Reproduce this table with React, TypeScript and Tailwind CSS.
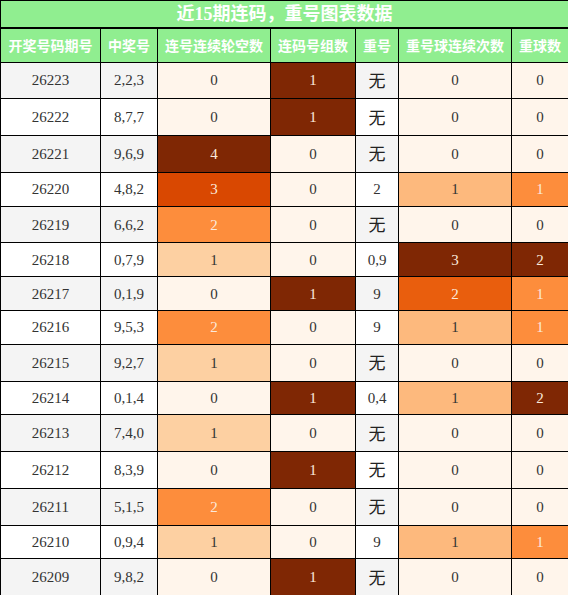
const rows: [string, string, number, number, string, number, number][] = [
  ['26223', '2,2,3', 0, 1, '无', 0, 0],
  ['26222', '8,7,7', 0, 1, '无', 0, 0],
  ['26221', '9,6,9', 4, 0, '无', 0, 0],
  ['26220', '4,8,2', 3, 0, '2', 1, 1],
  ['26219', '6,6,2', 2, 0, '无', 0, 0],
  ['26218', '0,7,9', 1, 0, '0,9', 3, 2],
  ['26217', '0,1,9', 0, 1, '9', 2, 1],
  ['26216', '9,5,3', 2, 0, '9', 1, 1],
  ['26215', '9,2,7', 1, 0, '无', 0, 0],
  ['26214', '0,1,4', 0, 1, '0,4', 1, 2],
  ['26213', '7,4,0', 1, 0, '无', 0, 0],
  ['26212', '8,3,9', 0, 1, '无', 0, 0],
  ['26211', '5,1,5', 2, 0, '无', 0, 0],
  ['26210', '0,9,4', 1, 0, '9', 1, 1],
  ['26209', '9,8,2', 0, 1, '无', 0, 0],
];

const headers = ['开奖号码期号', '中奖号', '连号连续轮空数', '连码号组数', '重号', '重号球连续次数', '重球数'];

// matplotlib "Oranges" stops
const stops = ['#fff5eb', '#fee6ce', '#fdd0a2', '#fdae6b', '#fd8d3c', '#f16913', '#d94801', '#a63603', '#7f2704'];

function hex(c: string) {
  return [1, 3, 5].map((i) => parseInt(c.slice(i, i + 2), 16));
}

function heat(t: number): string {
  const p = t * (stops.length - 1);
  const i = Math.min(Math.floor(p), stops.length - 2);
  const f = p - i;
  const a = hex(stops[i]);
  const b = hex(stops[i + 1]);
  const m = a.map((v, k) => Math.round(v + (b[k] - v) * f));
  return `rgb(${m[0]},${m[1]},${m[2]})`;
}

const maxes = [4, 1, 3, 2];

function HeatCell({ value, max }: { value: number; max: number }) {
  const t = max ? value / max : 0;
  return (
    <td
      className={`border border-black text-center py-[7.4px] ${t >= 0.5 ? 'text-[#fbe9dc]' : 'text-[#333]'}`}
      style={{ backgroundColor: heat(t) }}
    >
      {value}
    </td>
  );
}

export default function App() {
  return (
    <div className="w-[568px] bg-white">
      <table className="w-[568px] table-fixed border-collapse font-['Liberation_Serif','Noto_Sans_CJK_SC',serif] text-[15px] leading-[18px]">
        <colgroup>
          <col className="w-[100px]" />
          <col className="w-[57px]" />
          <col className="w-[113px]" />
          <col className="w-[85px]" />
          <col className="w-[43px]" />
          <col className="w-[113px]" />
          <col className="w-[57px]" />
        </colgroup>
        <thead>
          <tr>
            <th
              colSpan={7}
              className="h-[27px] border border-b-2 border-black bg-[#90ee90] p-0 text-center text-[18px] font-bold leading-[24px] text-white"
            >
              近15期连码，重号图表数据
            </th>
          </tr>
          <tr>
            {headers.map((h) => (
              <th
                key={h}
                className="border border-black bg-[#90ee90] py-[6px] px-0 text-center text-[14px] font-bold leading-[21px] text-white font-['Noto_Sans_CJK_SC',sans-serif] whitespace-nowrap"
              >
                {h}
              </th>
            ))}
          </tr>
        </thead>
        <tbody>
          {rows.map((r, i) => {
            const stripe = i % 2 === 0 ? 'bg-[#f4f4f4]' : 'bg-white';
            return (
              <tr key={r[0]}>
                <td className={`border border-black text-center py-[7.4px] text-[#333] ${stripe}`}>{r[0]}</td>
                <td className={`border border-black text-center py-[7.4px] text-[#333] ${stripe}`}>{r[1]}</td>
                <HeatCell value={r[2]} max={maxes[0]} />
                <HeatCell value={r[3]} max={maxes[1]} />
                <td className={`border border-black text-center py-[7.4px] text-[#333] ${stripe}`}>
                  {r[4] === '无' ? (
                    <span className="text-[17px] leading-[20px] text-[#222] font-['Noto_Sans_CJK_SC',sans-serif]">无</span>
                  ) : (
                    r[4]
                  )}
                </td>
                <HeatCell value={r[5]} max={maxes[2]} />
                <HeatCell value={r[6]} max={maxes[3]} />
              </tr>
            );
          })}
        </tbody>
      </table>
    </div>
  );
}
